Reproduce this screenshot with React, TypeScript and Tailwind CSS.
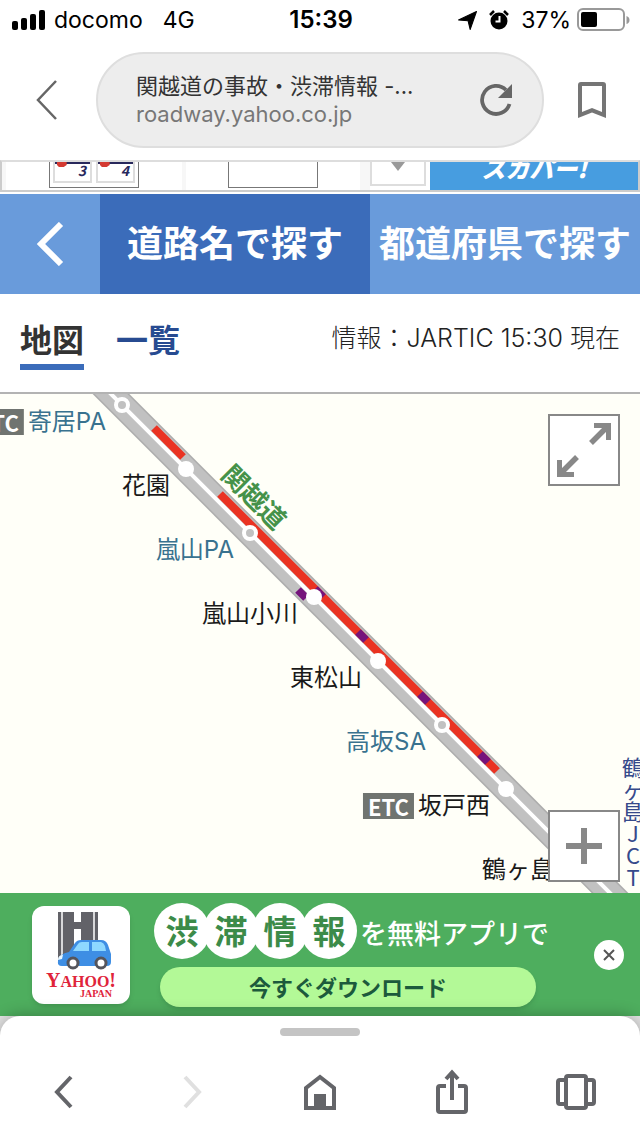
import { useState } from "react";
import clsx from "clsx";

interface Station {
  name: string;
  x: number;
  y: number;
  kind: "exit" | "area";
  etc?: boolean;
}

// Coordinates are relative to the top left corner of the map.
const STATIONS: Station[] = [
  { name: "寄居PA", x: 122, y: 11, kind: "area", etc: true },
  { name: "花園", x: 186, y: 75, kind: "exit" },
  { name: "嵐山PA", x: 250, y: 139, kind: "area" },
  { name: "嵐山小川", x: 314, y: 203, kind: "exit" },
  { name: "東松山", x: 378, y: 267, kind: "exit" },
  { name: "高坂SA", x: 442, y: 331, kind: "area" },
  { name: "坂戸西", x: 506, y: 395, kind: "exit", etc: true },
  { name: "鶴ヶ島", x: 570, y: 459, kind: "exit" },
];

// Horizontal extents of the slow sections of each lane.
const JAMS: [number, number][] = [
  [154, 183],
  [220, 497],
];
const REGULATIONS: [number, number][] = [
  [315, 323],
  [358, 366],
  [420, 428],
  [480, 488],
];

function StatusBar() {
  return (
    <div className="grid h-10 grid-cols-3 items-center pr-2.5 pl-3 text-black">
      <div className="flex items-center gap-2">
        <svg className="h-5 w-[34px]" viewBox="0 0 34 20" aria-hidden="true">
          <rect x="0" y="11" width="6" height="9" rx="2" />
          <rect x="9" y="8" width="6" height="12" rx="2" />
          <rect x="18" y="4" width="6" height="16" rx="2" />
          <rect x="27" y="0" width="6" height="20" rx="2" />
        </svg>
        <span className="text-[23px] leading-10">docomo</span>
        <span className="ml-3 text-[23px] leading-10">4G</span>
      </div>
      <div className="text-center text-2xl leading-10 font-semibold">15:39</div>
      <div className="flex items-center justify-end">
        <svg className="mr-3 h-[19px] w-[19px]" viewBox="0 0 18 18" aria-hidden="true">
          <path d="M17.500 .5L11.500 17.500L9.500 9.200L.5 8.500Z" stroke="black" strokeLinejoin="round" />
        </svg>
        <svg className="mr-3 h-5 w-5" viewBox="0 0 20 20" aria-hidden="true">
          <circle cx="10" cy="11" r="8.500" />
          <path d="M1 5L5 1M19 5L15 1" stroke="black" strokeWidth="2.500" />
          <path d="M10.500 6v5.500H6.500" stroke="white" strokeWidth="2" fill="none" />
        </svg>
        <span className="mr-1.5 text-[23px] leading-10">37%</span>
        <svg className="h-6 w-[53px] shrink-0" viewBox="0 0 53 24" aria-hidden="true">
          <rect x="1" y="1" width="46" height="21" rx="5" fill="none" stroke="#999" strokeWidth="2" />
          <rect x="4" y="4" width="16" height="15" rx="2" />
          <path d="M49.500 8Q52.500 9 52.500 12T49.500 16Z" fill="#999" />
        </svg>
      </div>
    </div>
  );
}

function AddressBar() {
  return (
    <header className="flex h-30 items-center">
      <button type="button" aria-label="戻る" className="flex w-24 shrink-0 justify-center">
        <svg className="h-10 w-6" viewBox="0 0 24 40" fill="none" stroke="#666" strokeWidth="2.500" aria-hidden="true">
          <path d="M20 1L2 20L20 39" />
        </svg>
      </button>
      <div className="flex h-24 min-w-0 flex-1 items-center justify-between rounded-full border-2 border-[#dedede] bg-[#ededed] pr-[30px] pl-[38px]">
        <button type="button" className="min-w-0 text-left">
          <span className="block truncate text-[22px] leading-7 text-[#333]">
            関越道の事故・渋滞情報 -...
          </span>
          <span className="block truncate text-[22px] leading-7 text-[#777]">
            roadway.yahoo.co.jp
          </span>
        </button>
        <button type="button" aria-label="再読み込み" className="shrink-0">
          <svg className="h-8 w-8" viewBox="0 0 32 32" aria-hidden="true">
            <path d="M29.500 20A14 14 0 1 1 26 6" fill="none" stroke="#666" strokeWidth="3.800" />
            <path d="M32 0V14H18Z" fill="#666" />
          </svg>
        </button>
      </div>
      <button type="button" aria-label="ブックマーク" className="flex w-24 shrink-0 justify-center">
        <svg className="h-9 w-7" viewBox="0 0 28 36" fill="#757575" aria-hidden="true">
          <path
            fillRule="evenodd"
            d="M3 0H25Q28 0 28 3V36L14 30.500L0 36V3Q0 0 3 0ZM4 4V30L14 26L24 30V4Z"
          />
        </svg>
      </button>
    </header>
  );
}

function ProductThumb({ label }: { label: string }) {
  return (
    <div className="relative h-[21px] w-[39px] border-2 border-t-0 border-[#ddd] bg-white text-right">
      <svg className="absolute top-0 left-0 h-1.5 w-full" viewBox="0 0 36 6" aria-hidden="true">
        <path d="M0 0H36V2H0Z" fill="#28285c" />
        <path d="M2 0H12V3L9 5H4L2 3Z" fill="#d43a32" />
      </svg>
      <span className="mr-1 block text-sm leading-4 font-bold text-[#28285c] italic">{label}</span>
    </div>
  );
}

function AdStrip() {
  return (
    <div className="flex h-8 overflow-hidden border-2 border-t-[#ddd] border-r-[#ccc] border-b-[#ccc] border-l-[#ccc] bg-white">
      <div className="flex w-[184px] shrink-0 justify-center border-x-4 border-[#f7f7f7]">
        <div className="flex h-[26px] w-[90px] justify-center gap-1 border border-t-0 border-[#777]">
          <ProductThumb label="3" />
          <ProductThumb label="4" />
        </div>
      </div>
      <div className="flex flex-1 justify-center border-r-10 border-[#f7f7f7]">
        <div className="h-[26px] w-[90px] border border-t-0 border-[#777]" />
      </div>
      <div className="flex h-6 w-14 justify-center border-2 border-t-0 border-[#ddd]">
        <svg className="h-[9px] w-[14px]" viewBox="0 0 14 9" aria-hidden="true">
          <path d="M0 0H14L7 9Z" fill="#999" />
        </svg>
      </div>
      <a
        href="#sky"
        className="ml-1 flex w-[208px] items-end justify-center bg-[#479de0] pb-2 text-2xl leading-7 font-black text-white italic"
      >
        スカパー!
      </a>
    </div>
  );
}

function SearchTabs() {
  return (
    <nav className="mt-0.5 grid h-[100px] grid-cols-[100px_1fr_1fr] text-4xl font-bold text-white">
      <button type="button" aria-label="前の画面" className="flex items-center justify-center bg-[#699bdb]">
        <svg className="h-11 w-7" viewBox="0 0 28 44" fill="none" stroke="white" strokeWidth="6" aria-hidden="true">
          <path d="M25 2L5 22L25 42" />
        </svg>
      </button>
      <a href="#road" className="flex items-center justify-center bg-[#3b6cba] pb-1.5 whitespace-nowrap">
        道路名で探す
      </a>
      <a href="#prefecture" className="flex items-center justify-center bg-[#699bdb] pb-1.5 whitespace-nowrap">
        都道府県で探す
      </a>
    </nav>
  );
}

function ViewSwitch() {
  const [view, setView] = useState<"map" | "list">("map");

  return (
    <div className="flex h-[100px] items-start justify-between border-b-2 border-[#b3b3b3] px-5 pt-5">
      <div className="flex gap-8 text-[32px] leading-12 font-bold">
        <button
          type="button"
          onClick={() => setView("map")}
          className={clsx("border-b-6 pb-0.5", view === "map" ? "border-[#3b6cba] text-[#333]" : "border-transparent text-[#274b91]")}
        >
          地図
        </button>
        <button
          type="button"
          onClick={() => setView("list")}
          className={clsx("border-b-6 pb-0.5", view === "list" ? "border-[#3b6cba] text-[#333]" : "border-transparent text-[#274b91]")}
        >
          一覧
        </button>
      </div>
      <p className="font-[Inter,'Noto_Sans_CJK_JP',sans-serif] text-[25px] leading-12 font-light text-[#222]">
        情報：JARTIC 15:30 現在
      </p>
    </div>
  );
}

function RoadLine() {
  return (
    <svg className="absolute top-0 left-0" width="720" height="609" viewBox="0 0 720 609" fill="none" aria-hidden="true">
      <path d="M91 -20L720 609" stroke="#adadad" strokeWidth="26" />
      <path d="M91 -20L720 609" stroke="#c1c1c1" strokeWidth="23" />
      <path d="M91 -20L720 609" stroke="white" strokeWidth="4" />
      {JAMS.map(([from, to]) => (
        <path key={from} d={`M${from} ${from - 120}L${to} ${to - 120}`} stroke="#ea3323" strokeWidth="8" />
      ))}
      {REGULATIONS.map(([from, to]) => (
        <path key={from} d={`M${from} ${from - 120}L${to} ${to - 120}`} stroke="#75147c" strokeWidth="8" />
      ))}
      <path d="M298 196L306 204" stroke="#75147c" strokeWidth="8" />
      {STATIONS.map((station) =>
        station.kind === "exit" ? (
          <circle key={station.name} cx={station.x} cy={station.y} r="8" fill="white" />
        ) : (
          <circle key={station.name} cx={station.x} cy={station.y} r="6" fill="#c1c1c1" stroke="white" strokeWidth="4" />
        ),
      )}
    </svg>
  );
}

function TrafficMap() {
  return (
    <main className="relative min-h-[400px] flex-1 overflow-hidden bg-[#fffff8]">
      <RoadLine />
      {STATIONS.map((station) => (
        <div
          key={station.name}
          className="absolute flex -translate-x-full -translate-y-1/2 items-center gap-1 font-[Inter,'Noto_Sans_CJK_JP',sans-serif] text-2xl leading-8 whitespace-nowrap"
          style={{ left: station.x - 16, top: station.y + 17 }}
        >
          {station.etc && (
            <span className="bg-[#707470] px-[5px] font-['Noto_Sans_CJK_JP',sans-serif] text-[22px] leading-[26px] font-bold text-white">
              ETC
            </span>
          )}
          <span className={station.kind === "area" ? "text-[#39728f]" : "text-[#1a1a1a]"}>{station.name}</span>
        </div>
      ))}
      <div className="absolute top-[86px] left-[215px] w-20 rotate-45 text-center text-[26px] leading-8 font-bold text-[#46924a]">
        関越道
      </div>
      <div className="absolute top-[361px] left-[621px] flex w-6 flex-col items-center text-[22px] leading-[22px] text-[#364a8b]">
        {["鶴", "ヶ", "島", "J", "C", "T"].map((char) => (
          <span key={char}>{char}</span>
        ))}
      </div>
      <button
        type="button"
        aria-label="全画面表示"
        className="absolute top-5 right-5 h-[72px] w-[72px] border-2 border-[#888] bg-white"
      >
        <svg viewBox="0 0 68 68" aria-hidden="true" fill="none" stroke="#888">
          <path d="M44 9.500H58.500V24" strokeWidth="5" />
          <path d="M57 11L41 27M11 57L27 41" strokeWidth="5.500" />
          <path d="M9.500 44V58.500H24" strokeWidth="5" />
        </svg>
      </button>
      <button
        type="button"
        aria-label="拡大"
        className="absolute right-5 bottom-[11px] h-[72px] w-[72px] border-2 border-[#888] bg-white"
      >
        <svg viewBox="0 0 68 68" aria-hidden="true" fill="none" stroke="#888" strokeWidth="6">
          <path d="M34 16V52M16 34H52" />
        </svg>
      </button>
    </main>
  );
}

function AppIcon() {
  return (
    <div className="flex h-[98px] w-[98px] shrink-0 flex-col items-center rounded-xl bg-white pt-1.5 shadow-md">
      <svg className="ml-1.5 h-[60px] w-[58px]" viewBox="0 0 58 60" aria-hidden="true">
        <path d="M3 0H43V30L20 42L3 52Z" fill="#626268" />
        <path d="M7 0V44M39 0V30" stroke="white" strokeWidth="1.500" />
        <path d="M19 0H26V10H19ZM19 17H26V34L19 38Z" fill="white" />
        <path d="M3 49Q4 42 14 40L20 31Q22 28 26 28H46Q51 28 53 33L56 42V50Q56 54 52 54H7Q2 54 3 49Z" fill="#3e8ee4" />
        <path d="M18 39L23 32Q24 30 27 30H34V39ZM37 30H46Q49 31 50 34L51 39H37Z" fill="#8ed8ff" />
        <path d="M3 48Q3 43 8 43L7 47Z" fill="#e8f7ff" />
        <circle cx="18" cy="51" r="5" fill="white" stroke="#55555c" strokeWidth="3" />
        <circle cx="46" cy="51" r="5" fill="white" stroke="#55555c" strokeWidth="3" />
      </svg>
      <div className="font-['Liberation_Serif',serif] font-bold text-[#e0243a]">
        <div className="text-xl leading-4">
          Y<span className="text-base leading-4">AHOO</span>!
        </div>
        <div className="pr-1 text-right text-[10px] leading-2">JAPAN</div>
      </div>
    </div>
  );
}

function AppBanner() {
  const [isOpen, setIsOpen] = useState(true);

  if (!isOpen) return null;

  return (
    <aside className="flex h-[123px] items-center bg-[#4eae5e] pr-4 pl-8">
      <AppIcon />
      <div className="ml-6 flex flex-1 flex-col gap-2 whitespace-nowrap">
        <div className="flex items-center">
          <div className="flex text-[33px] font-bold text-[#3c8b49]">
            {["渋", "滞", "情", "報"].map((char) => (
              <span key={char} className="-mr-[7px] flex h-14 w-14 items-center justify-center rounded-full bg-white leading-none">
                {char}
              </span>
            ))}
          </div>
          <span className="ml-2.5 pt-1 text-[27px] leading-10 font-medium text-white">を無料アプリで</span>
        </div>
        <a
          href="#download"
          className="ml-1.5 flex h-10 w-[376px] items-center justify-center rounded-full bg-[#b3f997] text-[22px] font-bold text-[#1c5a3c] shadow-md"
        >
          今すぐダウンロード
        </a>
      </div>
      <button
        type="button"
        aria-label="閉じる"
        onClick={() => setIsOpen(false)}
        className="flex h-[30px] w-[30px] shrink-0 items-center justify-center rounded-full bg-white"
      >
        <svg className="h-3 w-3" viewBox="0 0 12 12" stroke="#555" strokeWidth="2" aria-hidden="true">
          <path d="M1 1L11 11M11 1L1 11" />
        </svg>
      </button>
    </aside>
  );
}

function BottomBar() {
  return (
    <div className="bg-[#e4e4e4]">
      <footer className="relative h-30 rounded-t-[20px] bg-white pt-3 shadow-[0_0_16px_rgba(0,0,0,0.3)]">
        <div className="mx-auto h-2 w-20 rounded-full bg-[#c4c4c4]" />
        <div className="mt-7 grid grid-cols-5 justify-items-center">
          <button type="button" aria-label="前のページ">
            <svg className="h-14 w-11" viewBox="0 0 44 56" fill="none" stroke="#646569" strokeWidth="4" aria-hidden="true">
              <path d="M29 13L15 28L29 43" />
            </svg>
          </button>
          <button type="button" aria-label="次のページ" disabled>
            <svg className="h-14 w-11" viewBox="0 0 44 56" fill="none" stroke="#e0e0e0" strokeWidth="4" aria-hidden="true">
              <path d="M15 13L29 28L15 43" />
            </svg>
          </button>
          <button type="button" aria-label="ホーム">
            <svg className="h-14 w-11" viewBox="0 0 44 56" fill="none" stroke="#646569" strokeWidth="4" aria-hidden="true">
              <path d="M8 44V24L22 13L36 24V44Z" />
              <path d="M16 30H28V44H16Z" fill="#646569" stroke="none" />
            </svg>
          </button>
          <button type="button" aria-label="共有" className="pl-2">
            <svg className="h-14 w-11" viewBox="0 0 44 56" fill="none" stroke="#646569" strokeWidth="4" aria-hidden="true">
              <path d="M16 22H10Q8 22 8 24V46Q8 48 10 48H34Q36 48 36 46V24Q36 22 34 22H28M22 36V9M16 15L22 8.500L28 15" />
            </svg>
          </button>
          <button type="button" aria-label="タブ一覧">
            <svg className="h-14 w-11" viewBox="0 0 44 56" fill="none" stroke="#646569" strokeWidth="4" aria-hidden="true">
              <rect x="12" y="12" width="20" height="32" rx="2" />
              <path d="M12 16H6Q4 16 4 18V38Q4 40 6 40H12M32 16H38Q40 16 40 18V38Q40 40 38 40H32" />
            </svg>
          </button>
        </div>
      </footer>
    </div>
  );
}

export default function App() {
  return (
    <div className="flex min-h-screen flex-col bg-white font-[Inter,'Noto_Sans_CJK_JP',sans-serif]">
      <StatusBar />
      <AddressBar />
      <div className="flex flex-1 flex-col font-['Noto_Sans_CJK_JP',sans-serif]">
        <AdStrip />
        <SearchTabs />
        <ViewSwitch />
        <TrafficMap />
        <AppBanner />
      </div>
      <BottomBar />
    </div>
  );
}
